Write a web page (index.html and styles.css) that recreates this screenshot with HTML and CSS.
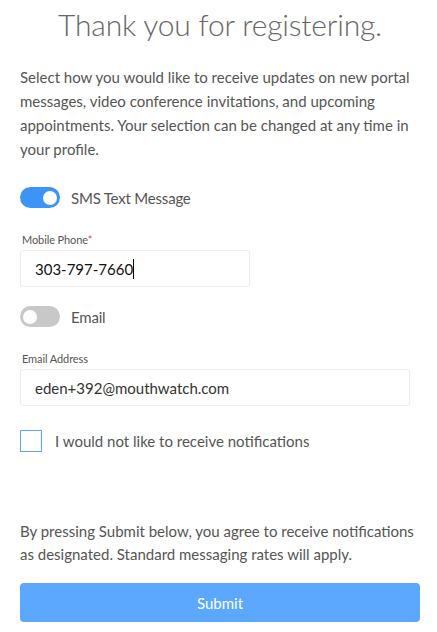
FILE: index.html
```html
<!DOCTYPE html>
<html lang="en">
<head>
    <meta charset="UTF-8">
    <meta name="viewport" content="width=device-width, initial-scale=1.0">
    <title>Thank you for registering</title>
    <link rel="stylesheet" href="styles.css">
</head>
<body>
    <div class="container">
        <h1 class="title">Thank you for registering.</h1>

        <p class="intro">Select how you would like to receive updates on new portal messages, video conference invitations, and upcoming appointments. Your selection can be changed at any time in your profile.</p>

        <!-- SMS option -->
        <div class="toggle-row">
            <span class="toggle on"><span class="knob"></span></span>
            <span class="toggle-label">SMS Text Message</span>
        </div>
        <div class="field">
            <label class="field-label">Mobile Phone<span class="req">*</span></label>
            <div class="input short"><span>303-797-7660</span><span class="caret"></span></div>
        </div>

        <!-- Email option -->
        <div class="toggle-row">
            <span class="toggle"><span class="knob"></span></span>
            <span class="toggle-label">Email</span>
        </div>
        <div class="field">
            <label class="field-label">Email Address</label>
            <div class="input"><span>eden+392@mouthwatch.com</span></div>
        </div>

        <div class="check-row">
            <span class="checkbox"></span>
            <span class="check-label">I would not like to receive notifications</span>
        </div>

        <p class="agree">By pressing Submit below, you agree to receive notifications as designated. Standard messaging rates will apply.</p>

        <button class="submit">Submit</button>
    </div>
</body>
</html>
```

FILE: styles.css
```css
body, html {
    margin: 0;
    padding: 0;
    background: #fff;
    font-family: 'Lato', 'Open Sans', sans-serif;
    color: #555;
}

.container {
    width: 400px;
    margin-left: 20px;
}

.title {
    font-weight: 300;
    font-size: 30px;
    color: #666;
    text-align: center;
    margin: 4px 0 0;
    line-height: 40px;
    letter-spacing: -0.2px;
}

.intro {
    font-size: 15px;
    line-height: 24px;
    margin: 21px 0 0;
}

.toggle-row {
    display: flex;
    align-items: center;
    gap: 11px;
    margin-top: 26px;
}

.toggle {
    position: relative;
    width: 40px;
    height: 21px;
    border-radius: 11px;
    background: #c8c8c8;
    flex-shrink: 0;
}

.toggle.on {
    background: #3d94f6;
}

.knob {
    position: absolute;
    top: 3.5px;
    left: 3px;
    width: 14px;
    height: 14px;
    border-radius: 50%;
    background: #fff;
}

.toggle.on .knob {
    left: 23px;
}

.toggle-label {
    font-size: 15px;
    color: #555;
    letter-spacing: -0.2px;
}

.field {
    margin-top: 25px;
}

.field-label {
    display: block;
    font-size: 11px;
    color: #555;
    margin-left: 2px;
    line-height: 14px;
    letter-spacing: -0.1px;
}

.req {
    color: #d9534f;
}

.input {
    display: flex;
    align-items: center;
    height: 37px;
    box-sizing: border-box;
    border: 1px solid #ececec;
    border-radius: 3px;
    padding: 0 14px;
    margin-top: 3px;
    font-size: 15px;
    color: #333;
    width: 390px;
}

.input.short {
    width: 230px;
    color: #111;
}

.caret {
    display: inline-block;
    width: 1px;
    height: 20px;
    background: #000;
}

.field + .toggle-row {
    margin-top: 19px;
}

.check-row {
    display: flex;
    align-items: center;
    gap: 13px;
    margin-top: 24px;
}

.checkbox {
    width: 20px;
    height: 20px;
    border: 1px solid #5aa5ff;
    flex-shrink: 0;
}

.check-label {
    font-size: 15px;
    color: #555;
}

.agree {
    font-size: 15px;
    line-height: 23px;
    margin: 68px 0 0;
}

.submit {
    display: block;
    width: 400px;
    height: 39px;
    margin-top: 17px;
    border: none;
    border-radius: 4px;
    background: #5ca8ff;
    color: #fff;
    font-family: inherit;
    font-size: 15px;
}
```
